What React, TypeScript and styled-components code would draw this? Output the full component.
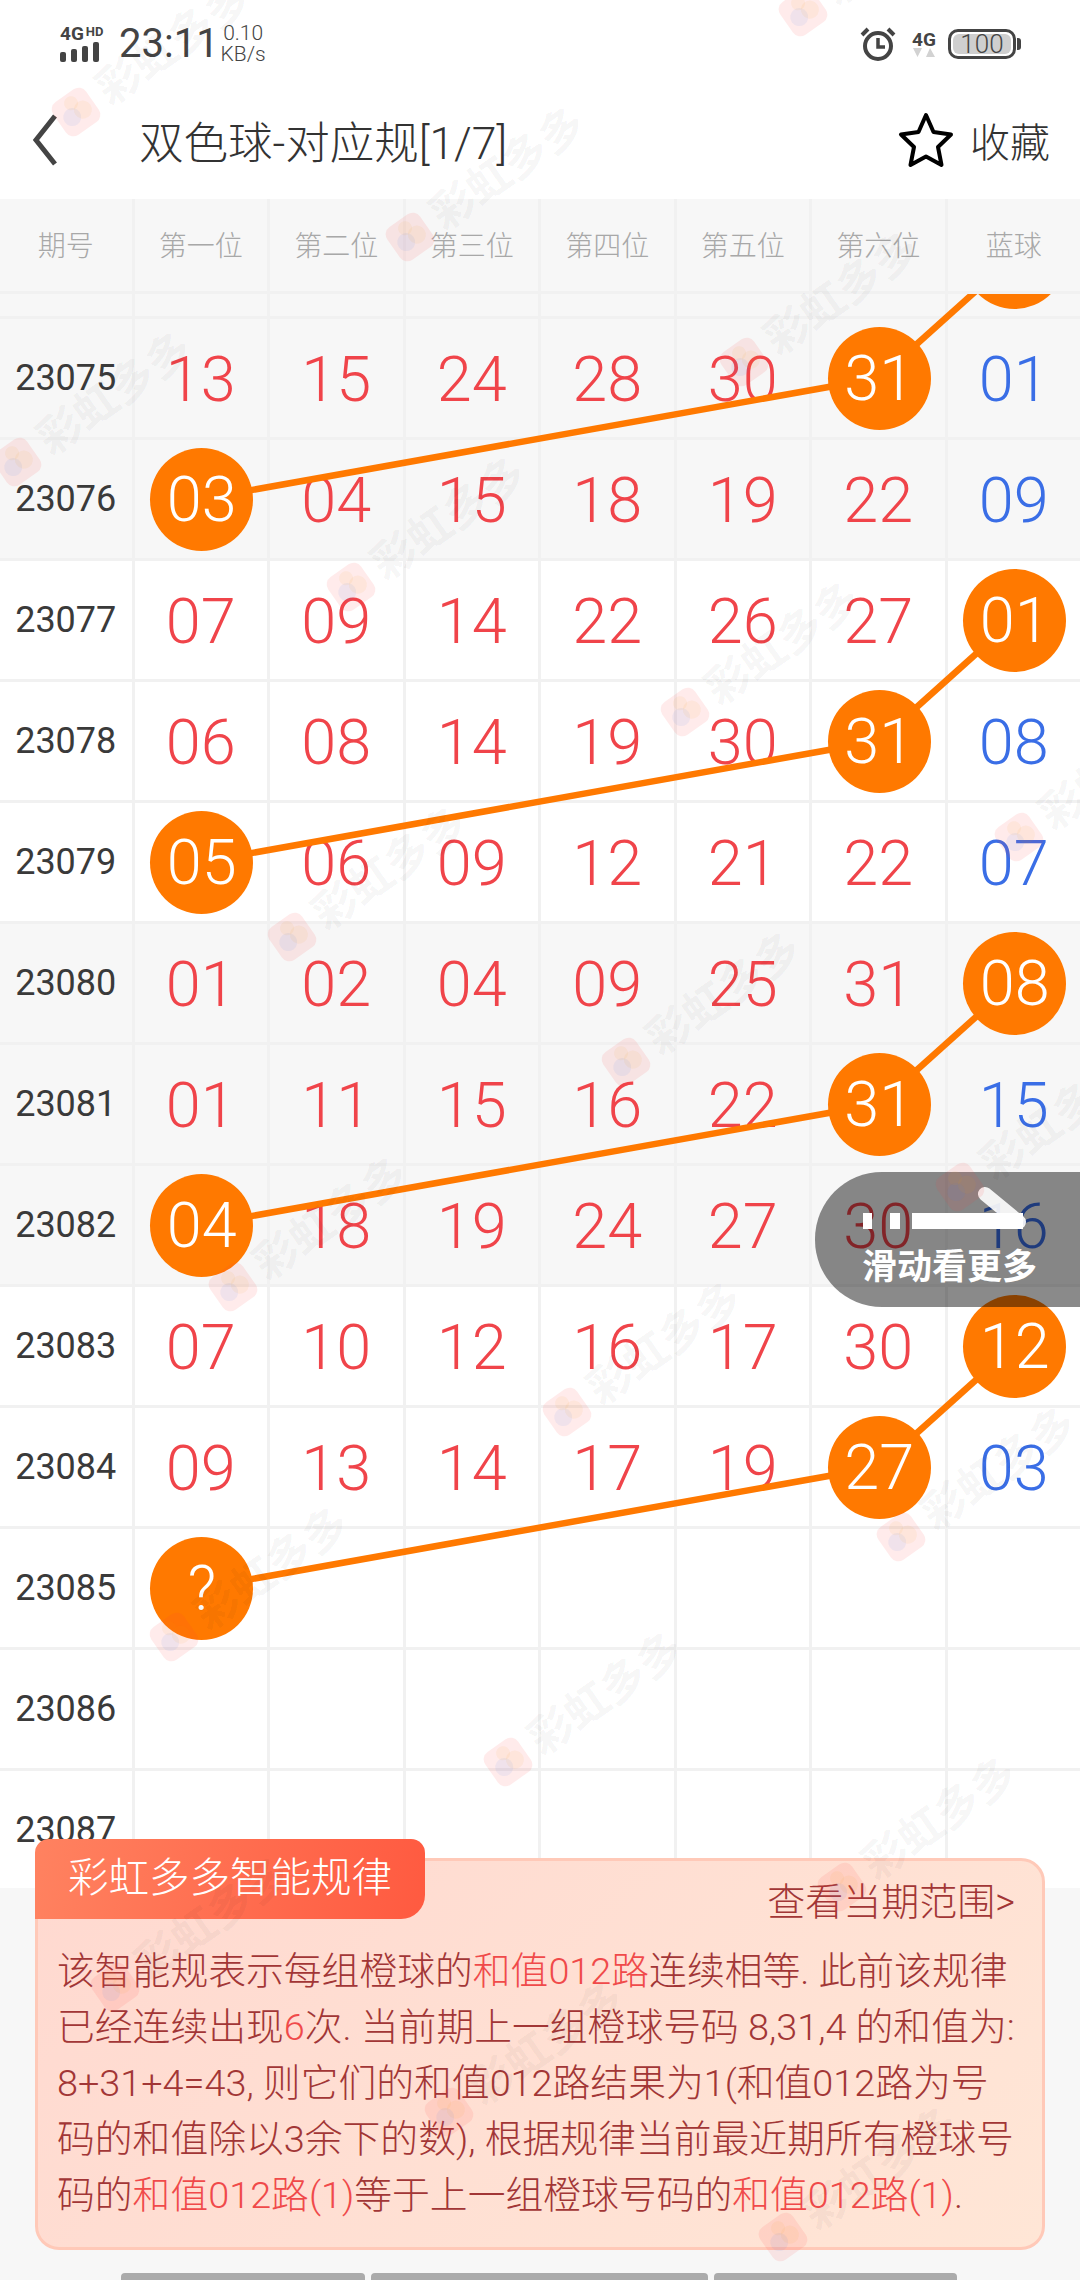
import React from 'react'
import styled, { createGlobalStyle } from 'styled-components'

const FONT = `Roboto, "Noto Sans CJK SC", sans-serif`
const ROW_H = 121
const COLS = '134.5px repeat(6, 135.5px) 1fr'

const GlobalStyle = createGlobalStyle`
	html, body {
		margin: 0;
		padding: 0;
		background: #f7f7f7;
	}
`

const Page = styled.div`
	position: relative;
	width: 1080px;
	height: 2280px;
	overflow: hidden;
	background: #f7f7f7;
	font-family: ${FONT};
`

const Top = styled.div`
	background: #fff;
`

const StatusBar = styled.div`
	display: flex;
	align-items: center;
	justify-content: space-between;
	height: 80px;
	padding: 8px 64px 0 60px;
	box-sizing: border-box;
	color: #444;
`

const StatusGroup = styled.div`
	display: flex;
	align-items: center;
`

const SignalBox = styled.div`
	display: flex;
	flex-direction: column;
	width: 48px;
	margin-right: 11px;
`

const SignalText = styled.div`
	display: flex;
	align-items: flex-start;
	height: 15px;
	font-size: 19px;
	line-height: 15px;
	font-weight: 700;
	white-space: nowrap;
	span {
		margin-left: 2px;
		font-size: 13px;
		line-height: 11px;
	}
`

const SignalBars = styled.div`
	display: flex;
	align-items: flex-end;
	gap: 5px;
	height: 20px;
	margin-top: 1px;
`

const SignalBar = styled.i<{ $h: number }>`
	display: block;
	width: 6px;
	height: ${p => p.$h}px;
	border-radius: 2px;
	background: #444;
`

const Clock = styled.div`
	font-size: 40px;
	line-height: 44px;
	margin-right: 2px;
`

const Speed = styled.div`
	font-size: 21px;
	line-height: 21px;
	font-weight: 300;
	text-align: center;
`

const NetBox = styled.div`
	display: flex;
	flex-direction: column;
	align-items: center;
	margin: 0 12px 0 16px;
	font-size: 19px;
	line-height: 16px;
	font-weight: 700;
`

const Battery = styled.div`
	position: relative;
	display: flex;
	align-items: center;
	justify-content: center;
	width: 68px;
	height: 30px;
	box-sizing: border-box;
	border: 3px solid #444;
	border-radius: 10px;
	padding: 2px;
	&::after {
		content: '';
		position: absolute;
		right: -8px;
		top: 6px;
		width: 4px;
		height: 12px;
		border-radius: 0 3px 3px 0;
		background: #444;
	}
`

const BatteryFill = styled.div`
	flex: 1;
	height: 100%;
	border-radius: 6px;
	background: #cfcfcf;
	color: #444;
	font-size: 26px;
	line-height: 20px;
	font-weight: 300;
	text-align: center;
`

const TitleBar = styled.div`
	display: flex;
	align-items: center;
	height: 119px;
	padding: 0 30px 0 30px;
	box-sizing: border-box;
`

const BackIcon = styled.svg`
	width: 36px;
	height: 52px;
	margin-right: 73px;
`

const Title = styled.div`
	flex: 1;
	font-size: 44.500px;
	font-weight: 300;
	color: #333;
	white-space: nowrap;
`

const StarIcon = styled.svg`
	width: 58px;
	height: 56px;
	margin-right: 15px;
`

const Fav = styled.div`
	font-size: 40px;
	font-weight: 300;
	color: #333;
`

const HeaderRow = styled.div`
	display: grid;
	grid-template-columns: ${COLS};
	height: 95px;
	border-bottom: 3px solid #f1f1f1;
	box-sizing: border-box;
	background: #f7f7f7;
`

const HeaderCell = styled.div`
	display: flex;
	align-items: center;
	justify-content: center;
	padding-bottom: 2px;
	border-right: 3px solid #f1f1f1;
	font-size: 28px;
	font-weight: 300;
	color: #a8a8a8;
	&:last-child {
		border-right: none;
	}
`

const Scroller = styled.div`
	height: 1594px;
	overflow: hidden;
`

const Rows = styled.div`
	position: relative;
	margin-top: -95.8px;
`

const Row = styled.div<{ $shade: boolean }>`
	display: grid;
	grid-template-columns: ${COLS};
	height: ${ROW_H}px;
	box-sizing: border-box;
	border-bottom: 3px solid #f1f1f1;
	background: ${p => (p.$shade ? '#f7f7f7' : '#fff')};
`

const Cell = styled.div`
	display: flex;
	align-items: center;
	justify-content: center;
	border-right: 3px solid #f1f1f1;
	&:last-child {
		border-right: none;
	}
`

const Period = styled(Cell)`
	font-size: 36px;
	font-weight: 400;
	color: #3a3a3a;
`

const Num = styled.span<{ $blue: boolean }>`
	padding-top: 2px;
	font-size: 63px;
	font-weight: 300;
	color: ${p => (p.$blue ? '#3a6ee6' : '#f0444a')};
`

const Ball = styled.span`
	position: relative;
	z-index: 2;
	display: flex;
	flex: none;
	align-items: center;
	justify-content: center;
	width: 103px;
	height: 103px;
	margin-left: 2px;
	border-radius: 50%;
	background: #ff7900;
	color: #fff;
	font-size: 63px;
	font-weight: 300;
`

const Lines = styled.svg`
	position: absolute;
	left: 0;
	top: 0;
	z-index: 1;
	width: 1080px;
	height: 1700px;
	pointer-events: none;
`

const Hint = styled.div`
	position: absolute;
	left: 815px;
	top: 1172px;
	z-index: 3;
	display: flex;
	flex-direction: column;
	width: 265px;
	height: 135px;
	padding: 14px 0 0 47px;
	box-sizing: border-box;
	border-radius: 67px 0 0 67px;
	background: rgba(0, 0, 0, 0.46);
`

const HintArrow = styled.svg`
	width: 165px;
	height: 50px;
	margin-left: 1px;
`

const HintText = styled.div`
	margin-top: 12px;
	font-size: 35px;
	line-height: 40px;
	font-weight: 700;
	color: #fff;
	white-space: nowrap;
`

const Panel = styled.div`
	position: absolute;
	left: 35px;
	top: 1858px;
	z-index: 4;
	width: 1010px;
	height: 392px;
	padding: 21px 0 0 19px;
	box-sizing: border-box;
	border: 3px solid #ffc9b8;
	border-radius: 24px;
	background: linear-gradient(135deg, #ffd9d0 0%, #ffe6d6 100%);
	color: #a23636;
`

const Tag = styled.div`
	position: absolute;
	left: -3px;
	top: -22px;
	width: 390px;
	height: 80px;
	padding-left: 33px;
	box-sizing: border-box;
	border-radius: 14px 14px 24px 0;
	background: linear-gradient(100deg, #ff8260 0%, #ff5a40 100%);
	color: #fff;
	font-size: 40.500px;
	line-height: 78px;
	font-weight: 300;
	white-space: nowrap;
`

const RangeLink = styled.div`
	height: 49px;
	padding-right: 27px;
	font-size: 38px;
	line-height: 40px;
	font-weight: 300;
	text-align: right;
`

const Body = styled.div`
	margin-top: 12px;
	font-size: 37.800px;
	line-height: 56px;
	font-weight: 300;
	white-space: nowrap;
`

const Mark = styled.em`
	font-style: normal;
	color: #f04a4a;
`

const BottomBars = styled.div`
	position: absolute;
	left: 121px;
	bottom: 0;
	z-index: 4;
	display: flex;
	gap: 6px;
`

const BottomBar = styled.div<{ $w: number }>`
	width: ${p => p.$w}px;
	height: 7px;
	border-radius: 4px 4px 0 0;
	background: #ababab;
`

const WatermarkLayer = styled.div`
	position: absolute;
	inset: 0;
	z-index: 5;
	pointer-events: none;
`

const Watermark = styled.div`
	position: absolute;
	display: flex;
	align-items: center;
	gap: 8px;
	transform: translate(-23px, -23px) rotate(-35deg);
	transform-origin: 23px 23px;
	font-size: 44px;
	line-height: 46px;
	font-weight: 700;
	color: rgba(0, 0, 0, 0.05);
	white-space: nowrap;
`

const WatermarkLogo = styled.svg`
	flex: none;
	width: 46px;
	height: 46px;
`

const HEADERS = ['期号', '第一位', '第二位', '第三位', '第四位', '第五位', '第六位', '蓝球']

type RowData = { id: string; nums: string[]; ball: number; shade: boolean }

const ROWS: RowData[] = [
	{ id: '23074', nums: ['', '', '', '', '', '', ''], ball: 6, shade: true },
	{ id: '23075', nums: ['13', '15', '24', '28', '30', '31', '01'], ball: 5, shade: true },
	{ id: '23076', nums: ['03', '04', '15', '18', '19', '22', '09'], ball: 0, shade: true },
	{ id: '23077', nums: ['07', '09', '14', '22', '26', '27', '01'], ball: 6, shade: false },
	{ id: '23078', nums: ['06', '08', '14', '19', '30', '31', '08'], ball: 5, shade: false },
	{ id: '23079', nums: ['05', '06', '09', '12', '21', '22', '07'], ball: 0, shade: false },
	{ id: '23080', nums: ['01', '02', '04', '09', '25', '31', '08'], ball: 6, shade: true },
	{ id: '23081', nums: ['01', '11', '15', '16', '22', '31', '15'], ball: 5, shade: true },
	{ id: '23082', nums: ['04', '18', '19', '24', '27', '30', '16'], ball: 0, shade: true },
	{ id: '23083', nums: ['07', '10', '12', '16', '17', '30', '12'], ball: 6, shade: false },
	{ id: '23084', nums: ['09', '13', '14', '17', '19', '27', '03'], ball: 5, shade: false },
	{ id: '23085', nums: ['?', '', '', '', '', '', ''], ball: 0, shade: false },
	{ id: '23086', nums: ['', '', '', '', '', '', ''], ball: -1, shade: false },
	{ id: '23087', nums: ['', '', '', '', '', '', ''], ball: -1, shade: false },
]

const ballX = (col: number) => (col === 6 ? 1013.75 : 134.5 + 135.5 * col + 67)
const ballY = (row: number) => row * ROW_H + (ROW_H - 3) / 2

const WATERMARKS: { x: number; y: number }[] = []
for (let i = -3; i < 7; i++) {
	for (let j = -2; j < 9; j++) {
		const x = 76 + i * 334 - j * 59
		const y = 112 + i * 125 + j * 350
		if (x > -30 && x < 1060 && y > -20 && y < 2280) WATERMARKS.push({ x, y })
	}
}

const Logo = () => (
	<WatermarkLogo viewBox="0 0 46 46">
		<rect x="3" y="3" width="40" height="40" rx="9" fill="#ff3b3b" opacity="0.1" />
		<circle cx="17" cy="25" r="9" fill="#3b82f6" opacity="0.08" />
		<circle cx="30" cy="25" r="9" fill="#f59e0b" opacity="0.07" />
		<circle cx="24" cy="13" r="7" fill="#f59e0b" opacity="0.07" />
	</WatermarkLogo>
)

const App = () => {
	return (
		<Page>
			<GlobalStyle />
			<Top>
				<StatusBar>
					<StatusGroup>
						<SignalBox>
							<SignalText>
								4G<span>HD</span>
							</SignalText>
							<SignalBars>
								<SignalBar $h={10} />
								<SignalBar $h={13} />
								<SignalBar $h={16} />
								<SignalBar $h={20} />
							</SignalBars>
						</SignalBox>
						<Clock>23:11</Clock>
						<Speed>
							0.10
							<br />
							KB/s
						</Speed>
					</StatusGroup>
					<StatusGroup>
						<svg width="36" height="34" viewBox="0 0 36 34" fill="none" stroke="#444">
							<circle cx="18" cy="19" r="13" strokeWidth="4" />
							<path d="M18 11v9h7" strokeWidth="3.5" />
							<path d="M2 8l6-6M34 8l-6-6" strokeWidth="4" />
						</svg>
						<NetBox>
							4G
							<svg width="24" height="9" viewBox="0 0 24 9" fill="#d2d2d2">
								<path d="M1 0h9L5.500 9zM18 0l5 9h-9z" />
							</svg>
						</NetBox>
						<Battery>
							<BatteryFill>100</BatteryFill>
						</Battery>
					</StatusGroup>
				</StatusBar>
				<TitleBar>
					<BackIcon viewBox="0 0 36 52" fill="none" stroke="#444" strokeWidth="5">
						<path d="M25 2L6 26l19 24" />
					</BackIcon>
					<Title>双色球-对应规[1/7]</Title>
					<StarIcon viewBox="0 0 58 56" fill="none" stroke="#000" strokeWidth="4" strokeLinejoin="round">
						<path d="M29 3l7.500 17L54 22.500 41 35l3.500 18L29 44.500 13.500 53 17 35 4 22.500 21.500 20z" />
					</StarIcon>
					<Fav>收藏</Fav>
				</TitleBar>
			</Top>
			<HeaderRow>
				{HEADERS.map(h => (
					<HeaderCell key={h}>{h}</HeaderCell>
				))}
			</HeaderRow>
			<Scroller>
				<Rows>
					<Lines viewBox="0 0 1080 1700">
						{ROWS.map((row, i) => {
							const next = ROWS[i + 1]
							if (!next || row.ball < 0 || next.ball < 0 || row.ball === 0) return null
							return (
								<line
									key={row.id}
									x1={ballX(row.ball)}
									y1={ballY(i)}
									x2={ballX(next.ball)}
									y2={ballY(i + 1)}
									stroke="#ff7900"
									strokeWidth="6.500"
								/>
							)
						})}
					</Lines>
					{ROWS.map(row => (
						<Row key={row.id} $shade={row.shade}>
							<Period>{row.id}</Period>
							{row.nums.map((n, c) => (
								<Cell key={c}>{c === row.ball ? <Ball>{n}</Ball> : <Num $blue={c === 6}>{n}</Num>}</Cell>
							))}
						</Row>
					))}
				</Rows>
			</Scroller>
			<Hint>
				<HintArrow viewBox="0 0 165 50" fill="none" stroke="#fff">
					<path d="M0 35h9M27 35h10M49 35h111" strokeWidth="16" />
					<path d="M122 8l34 28" strokeWidth="14" strokeLinecap="round" opacity="0.9" />
				</HintArrow>
				<HintText>滑动看更多</HintText>
			</Hint>
			<Panel>
				<Tag>彩虹多多智能规律</Tag>
				<RangeLink>查看当期范围&gt;</RangeLink>
				<Body>
					该智能规表示每组橙球的<Mark>和值012路</Mark>连续相等. 此前该规律
					<br />
					已经连续出现<Mark>6</Mark>次. 当前期上一组橙球号码 8,31,4 的和值为:
					<br />
					8+31+4=43, 则它们的和值012路结果为1(和值012路为号
					<br />
					码的和值除以3余下的数), 根据规律当前最近期所有橙球号
					<br />
					码的<Mark>和值012路(1)</Mark>等于上一组橙球号码的<Mark>和值012路(1)</Mark>.
				</Body>
			</Panel>
			<BottomBars>
				<BottomBar $w={244} />
				<BottomBar $w={337} />
				<BottomBar $w={243} />
			</BottomBars>
			<WatermarkLayer>
				{WATERMARKS.map(w => (
					<Watermark key={`${w.x}-${w.y}`} style={{ left: w.x, top: w.y }}>
						<Logo />
						彩虹多多
					</Watermark>
				))}
			</WatermarkLayer>
		</Page>
	)
}

export default App
